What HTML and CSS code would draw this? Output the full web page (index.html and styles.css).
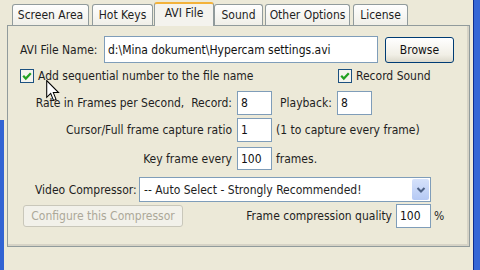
FILE: index.html
```html
<!DOCTYPE html>
<html>
<head>
    <title>AVI File</title>
    <link rel="stylesheet" href="styles.css">
</head>
<body>
    <div class="screen">
        <div class="edge-left"></div>
        <div class="dialog">
            <div class="tabs">
                <div class="tab tab-screen">Screen Area</div>
                <div class="tab tab-keys">Hot Keys</div>
                <div class="tab tab-avi active">AVI File</div>
                <div class="tab tab-sound">Sound</div>
                <div class="tab tab-other">Other Options</div>
                <div class="tab tab-license">License</div>
            </div>
            <div class="panel">
                <div class="row row-file">
                    <span class="file-label">AVI File Name:</span>
                    <input class="field file-field" type="text" value="d:\Mina dokument\Hypercam settings.avi">
                    <button class="btn browse">Browse</button>
                </div>
                <div class="row row-checks">
                    <label class="check check-seq">
                        <svg class="box" width="14" height="14" viewBox="0 0 14 14">
                            <rect x="0.5" y="0.5" width="13" height="13" fill="#f4f4ee" stroke="#1c5180"/>
                            <path d="M3.2 6.8 L5.8 9.6 L10.8 4.2" fill="none" stroke="#21a121" stroke-width="2.2"/>
                        </svg>
                        Add sequential number to the file name
                    </label>
                    <label class="check">
                        <svg class="box" width="14" height="14" viewBox="0 0 14 14">
                            <rect x="0.5" y="0.5" width="13" height="13" fill="#f4f4ee" stroke="#1c5180"/>
                            <path d="M3.2 6.8 L5.8 9.6 L10.8 4.2" fill="none" stroke="#21a121" stroke-width="2.2"/>
                        </svg>
                        Record Sound
                    </label>
                </div>
                <div class="row row-rate">
                    <span class="num-label">Rate in Frames per Second,&nbsp; Record:</span>
                    <input class="field num" type="text" value="8">
                    <span class="playback">Playback:</span>
                    <input class="field num" type="text" value="8">
                </div>
                <div class="row row-ratio">
                    <span class="num-label">Cursor/Full frame capture ratio</span>
                    <input class="field num" type="text" value="1">
                    <span class="hint">(1 to capture every frame)</span>
                </div>
                <div class="row row-key">
                    <span class="num-label">Key frame every</span>
                    <input class="field num" type="text" value="100">
                    <span class="hint">frames.</span>
                </div>
                <div class="row row-codec">
                    <span class="codec-label">Video Compressor:</span>
                    <div class="select">
                        <span class="select-text">-- Auto Select - Strongly Recommended!</span>
                        <span class="select-arrow">
                            <svg width="10" height="8" viewBox="0 0 10 8">
                                <path d="M1.5 2 L5 5.5 L8.5 2" fill="none" stroke="#4d6185" stroke-width="2"/>
                            </svg>
                        </span>
                    </div>
                </div>
                <div class="row row-quality">
                    <button class="btn configure" disabled>Configure this Compressor</button>
                    <span class="quality-label">Frame compression quality</span>
                    <input class="field num quality" type="text" value="100">
                    <span class="percent">%</span>
                </div>
            </div>
        </div>
        <div class="edge-right"></div>
        <svg class="cursor" width="14" height="22" viewBox="0 0 13 21">
            <path d="M0.5 0.5 L0.5 16.5 L4.3 12.8 L7 19.5 L9.4 18.5 L6.8 12 L11.8 12 Z" fill="#fff" stroke="#000" stroke-width="1"/>
        </svg>
    </div>
</body>
</html>
```

FILE: styles.css
```css
* {
    box-sizing: border-box;
}
body {
    margin: 0;
    background: #ece9d8;
    font-family: "DejaVu Sans Condensed", "DejaVu Sans", sans-serif;
    font-size: 12px;
    color: #1e1e1e;
}
.screen {
    display: flex;
    width: 480px;
    height: 270px;
    overflow: hidden;
    position: relative;
}
.edge-left {
    width: 4px;
    background: linear-gradient(to bottom, #ece9d8 0, #ece9d8 120px, #3163d3 120px);
}
.dialog {
    width: 469px;
    padding-left: 3px;
}
.edge-right {
    flex: 1;
    background: #3466d6;
    border-left: 1px solid #0b2c8f;
}

/* tabs */
.tabs {
    display: flex;
    align-items: flex-end;
    height: 25px;
    padding: 2px 0 0 5px;
}
.tab {
    height: 21px;
    border: 1px solid #919b9c;
    border-bottom: 0;
    border-radius: 3px 3px 0 0;
    background: linear-gradient(#fefefe, #f0efe8);
    text-align: center;
    line-height: 20px;
    white-space: nowrap;
}
.tab.active {
    height: 24px;
    margin-bottom: -1px;
    position: relative;
    z-index: 1;
    background: #f4f3ee;
    border-top: 2px solid #f3b23a;
    line-height: 18px;
}
.tab-screen { width: 77px; }
.tab-keys { width: 61px; margin-left: 3px; }
.tab-avi { width: 60px; margin-left: 1px; }
.tab-sound { width: 49px; }
.tab-other { width: 85px; margin-left: 2px; }
.tab-license { width: 55px; margin-left: 3px; }

/* panel */
.panel {
    width: 463px;
    height: 222px;
    border: 1px solid #919b9c;
    background: #ece9d8;
    padding: 10px 0 0 12px;
    box-shadow: inset -2px -2px 0 #d6d3c6;
}
.row {
    display: flex;
    align-items: center;
    white-space: nowrap;
}
.field {
    font: inherit;
    color: #111;
    background: #fff;
    border: 1px solid #7f9db9;
    padding: 0 3px;
    margin: 0;
    outline: none;
}
.btn {
    font: inherit;
    color: #111;
    border: 1px solid #003c74;
    border-radius: 3px;
    background: linear-gradient(#ffffff, #f1efe6 70%, #dcd9cc);
    padding: 0;
    margin: 0;
}

.row-file {
    height: 27px;
}
.file-label {
    width: 84px;
}
.file-field {
    width: 274px;
    height: 27px;
}
.browse {
    width: 69px;
    height: 26px;
    margin-left: 7px;
}

.row-checks {
    height: 16px;
    margin-top: 5px;
}
.check {
    display: flex;
    align-items: center;
    gap: 4px;
}
.check-seq {
    width: 318px;
}

.num-label {
    width: 212px;
    text-align: right;
    margin-right: 5px;
}
.num {
    width: 35px;
    height: 24px;
}
.hint {
    margin-left: 4px;
}
.row-rate {
    margin-top: 7px;
}
.playback {
    width: 57px;
    margin-left: 8px;
}
.row-ratio {
    margin-top: 3px;
}
.row-key {
    margin-top: 5px;
}
.row-key .num {
    height: 23px;
}

.row-codec {
    margin-top: 7px;
}
.codec-label {
    width: 104px;
    margin-left: 15px;
}
.select {
    display: flex;
    align-items: center;
    width: 292px;
    height: 25px;
    background: #fff;
    border: 1px solid #7f9db9;
    padding: 0 1px 0 4px;
}
.select-text {
    flex: 1;
}
.select-arrow {
    display: flex;
    align-items: center;
    justify-content: center;
    width: 17px;
    height: 21px;
    border-radius: 2px;
    background: linear-gradient(#d6e2fb, #b5c9f4);
}

.row-quality {
    margin-top: 2px;
}
.configure {
    width: 160px;
    height: 22px;
    margin-left: 3px;
    color: #aca899;
    border-color: #c9c7ba;
    background: #f2f1ea;
}
.quality-label {
    width: 209px;
    text-align: right;
    margin-right: 4px;
}
.quality {
    height: 24px;
}
.percent {
    margin-left: 3px;
}

.cursor {
    position: absolute;
    left: 46px;
    top: 80px;
}
```
